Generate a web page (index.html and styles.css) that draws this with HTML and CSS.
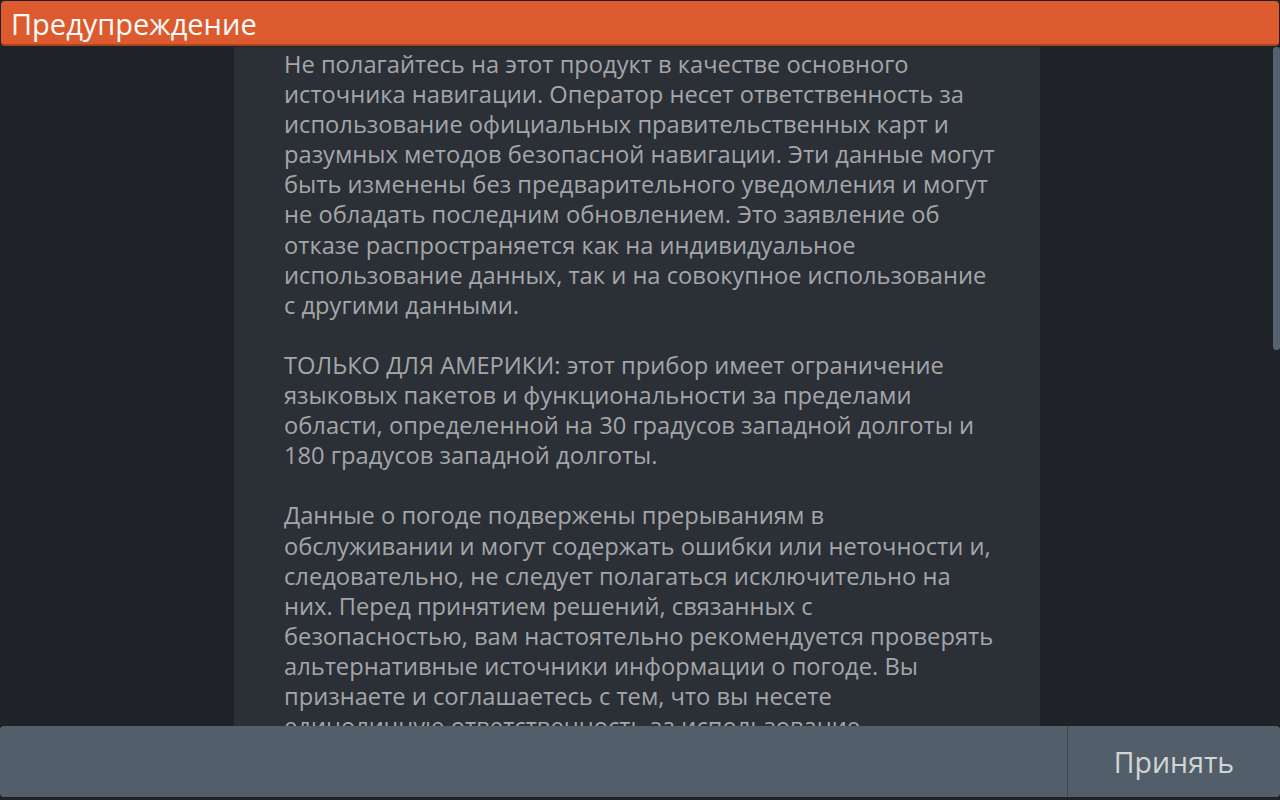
FILE: index.html
```html
<!DOCTYPE html>
<html lang="ru">
<head>
<meta charset="utf-8">
<title>Предупреждение</title>
<link rel="stylesheet" href="styles.css">
</head>
<body>
<div class="screen">
  <header class="titlebar">Предупреждение</header>
  <div class="main">
    <div class="panel">
      <p>Не полагайтесь на этот продукт в качестве основного<br>источника навигации. Оператор несет ответственность за<br>использование официальных правительственных карт и<br>разумных методов безопасной навигации. Эти данные могут<br>быть изменены без предварительного уведомления и могут<br>не обладать последним обновлением. Это заявление об<br>отказе распространяется как на индивидуальное<br>использование данных, так и на совокупное использование<br>с другими данными.</p>
      <p>ТОЛЬКО ДЛЯ АМЕРИКИ: этот прибор имеет ограничение<br>языковых пакетов и функциональности за пределами<br>области, определенной на 30 градусов западной долготы и<br>180 градусов западной долготы.</p>
      <p>Данные о погоде подвержены прерываниям в<br>обслуживании и могут содержать ошибки или неточности и,<br>следовательно, не следует полагаться исключительно на<br>них. Перед принятием решений, связанных с<br>безопасностью, вам настоятельно рекомендуется проверять<br>альтернативные источники информации о погоде. Вы<br>признаете и соглашаетесь с тем, что вы несете<br>единоличную ответственность за использование<br>информации о погоде.</p>
    </div>
    <div class="scrollbar"></div>
  </div>
  <footer class="actions">
    <div class="actions-spacer"></div>
    <button class="accept">Принять</button>
  </footer>
</div>
</body>
</html>
```
FILE: styles.css
```css
html, body {
  margin: 0;
  padding: 0;
  background: #1f2227;
}
.screen {
  width: 1280px;
  height: 800px;
  display: flex;
  flex-direction: column;
  overflow: hidden;
  font-family: "Open Sans", "Noto Sans", sans-serif;
}
.titlebar {
  margin: 1px 1px 0 1px;
  height: 43px;
  background: #dc5a2e;
  border-bottom: 2px solid #a9441f;
  border-radius: 4px;
  color: #fafafa;
  font-size: 29px;
  line-height: 46px;
  padding-left: 10px;
  box-sizing: content-box;
  flex: none;
}
.main {
  flex: 1;
  min-height: 0;
  display: flex;
  margin-top: 1px;
  overflow: hidden;
}
.panel {
  margin-left: 234px;
  width: 806px;
  background: #2b2f36;
  padding: 2px 0 0 50px;
  box-sizing: border-box;
  color: #a4a6a8;
  font-size: 23.7px;
  line-height: 30.1px;
  white-space: nowrap;
}
.panel p {
  margin: 0 0 30.1px 0;
}
.scrollbar {
  margin-left: auto;
  width: 7px;
  height: 303px;
  background: #536170;
  border-radius: 3px;
}
.actions {
  flex: none;
  height: 71px;
  margin-bottom: 3px;
  background: #525e6a;
  border-radius: 4px;
  display: flex;
}
.actions-spacer {
  flex: 1;
  border-right: 1px solid #3d4750;
}
.accept {
  width: 212px;
  background: transparent;
  border: none;
  color: #d2d4d6;
  font-family: "Open Sans", "Noto Sans", sans-serif;
  font-size: 28.5px;
  padding: 0;
}
```
